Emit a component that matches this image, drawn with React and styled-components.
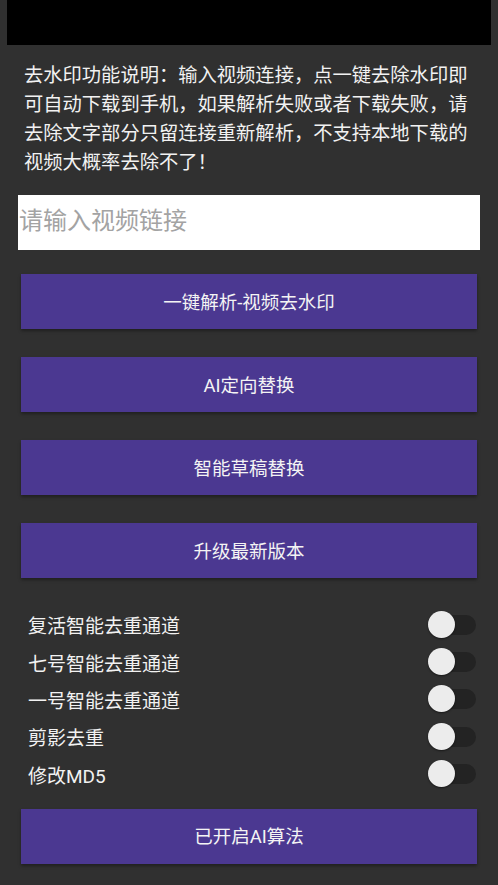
import React from 'react'
import styled, { createGlobalStyle } from 'styled-components'

const GlobalStyle = createGlobalStyle`
  html, body {
    margin: 0;
    padding: 0;
    background-color: #303030;
  }
  body {
    font-family: Roboto, "Noto Sans CJK SC", "Noto Sans", sans-serif;
  }
`

const switches = [
  '复活智能去重通道',
  '七号智能去重通道',
  '一号智能去重通道',
  '剪影去重',
  '修改MD5'
]

const App = () => {
  return (
    <Page>
      <GlobalStyle />
      <TopBar />
      <Notice>
        去水印功能说明：输入视频连接，点一键去除水印即可自动下载到手机，如果解析失败或者下载失败，请去除文字部分只留连接重新解析，不支持本地下载的视频大概率去除不了！
      </Notice>
      <LinkInput placeholder="请输入视频链接" />
      <ButtonList>
        <ActionButton>一键解析-视频去水印</ActionButton>
        <ActionButton>AI定向替换</ActionButton>
        <ActionButton>智能草稿替换</ActionButton>
        <ActionButton>升级最新版本</ActionButton>
      </ButtonList>
      <SwitchList>
        {switches.map(label => (
          <SwitchRow key={label}>
            <SwitchLabel>{label}</SwitchLabel>
            <Toggle>
              <Track />
              <Thumb />
            </Toggle>
          </SwitchRow>
        ))}
      </SwitchList>
      <BottomButton>已开启AI算法</BottomButton>
    </Page>
  )
}

const Page = styled.div`
  width: 498px;
  min-height: 885px;
  background-color: #303030;
  display: flex;
  flex-direction: column;
  box-sizing: border-box;
`

const TopBar = styled.div`
  height: 45px;
  margin: 0 7px;
  background-color: #000;
`

const Notice = styled.p`
  margin: 16px 0 0 0;
  padding: 0 24px 0 24px;
  color: #f2f2f2;
  font-size: 19.3px;
  line-height: 29px;
`

const LinkInput = styled.input`
  margin: 18px 18px 0 18px;
  height: 55px;
  box-sizing: border-box;
  border: none;
  outline: none;
  background-color: #fff;
  padding: 0 0 4px 1px;
  font-family: inherit;
  font-size: 24px;
  color: #333;

  &::placeholder {
    color: #a3a3a3;
  }
`

const ButtonList = styled.div`
  display: flex;
  flex-direction: column;
  gap: 28px;
  margin: 24px 21px 0 21px;
`

const ActionButton = styled.button`
  height: 55px;
  border: none;
  background-color: #4b3891;
  color: #f4f4f4;
  font-family: inherit;
  font-size: 18.5px;
  padding: 0 0 2px 0;
  box-shadow: 0 2px 3px rgba(0, 0, 0, 0.35);
`

const SwitchList = styled.div`
  display: flex;
  flex-direction: column;
  margin: 28px 22px 0 28px;
`

const SwitchRow = styled.div`
  height: 37.4px;
  display: flex;
  align-items: center;
  justify-content: space-between;
`

const SwitchLabel = styled.span`
  color: #f2f2f2;
  font-size: 19px;
`

const Toggle = styled.div`
  position: relative;
  width: 48px;
  height: 28px;
`

const Track = styled.div`
  position: absolute;
  left: 12px;
  right: 0;
  top: 4px;
  height: 20px;
  border-radius: 10px;
  background-color: #232323;
`

const Thumb = styled.div`
  position: absolute;
  left: 0;
  top: 0;
  width: 27px;
  height: 27px;
  border-radius: 50%;
  background-color: #ececec;
  box-shadow: 0 1px 2px rgba(0, 0, 0, 0.5);
`

const BottomButton = styled(ActionButton)`
  margin: 16px 21px 0 21px;
`

export default App
